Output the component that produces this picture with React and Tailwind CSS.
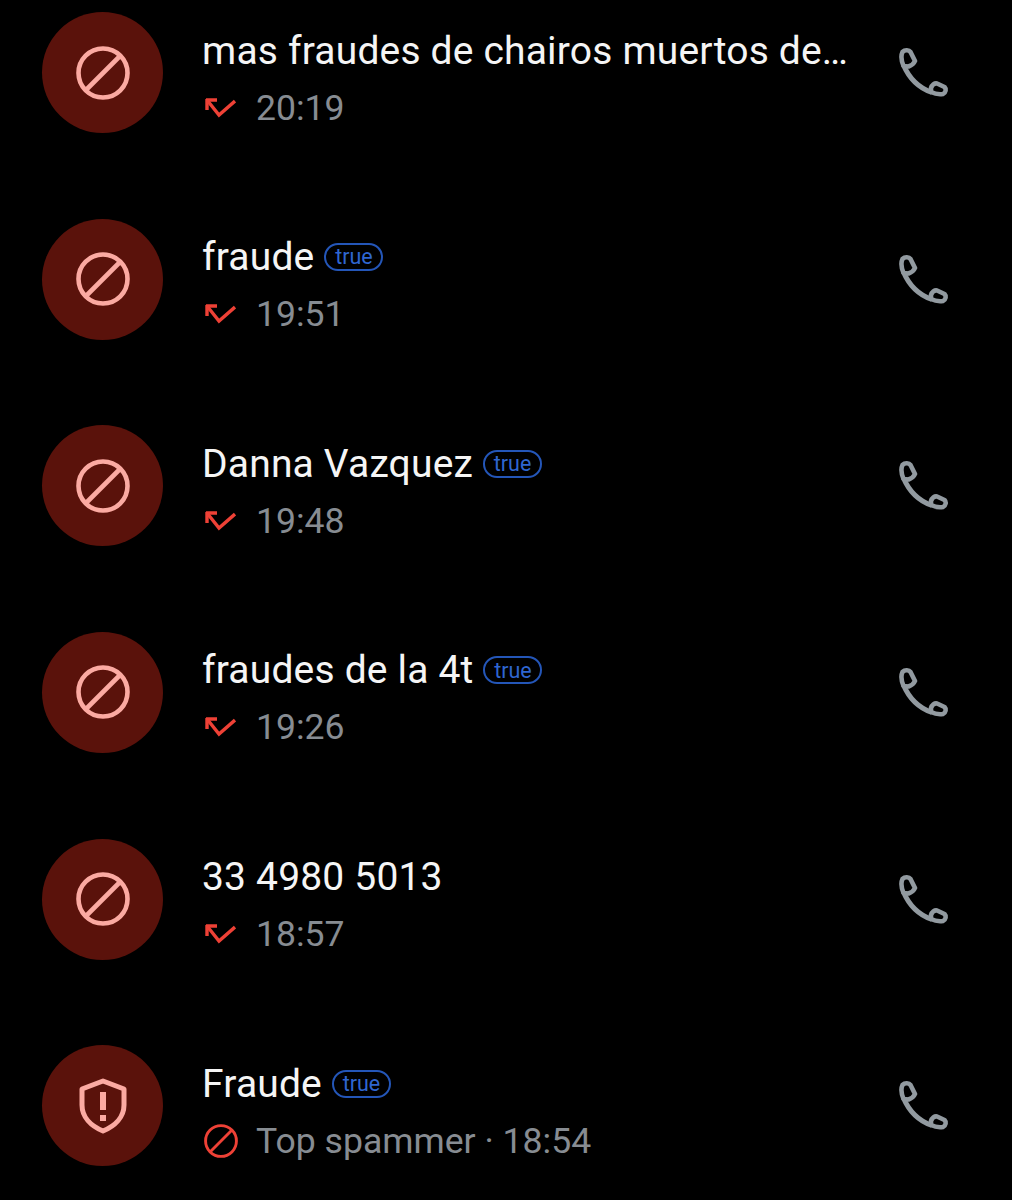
const calls = [
  { name: "mas fraudes de chairos muertos de…", time: "20:19" },
  { name: "fraude", time: "19:51", badge: true },
  { name: "Danna Vazquez", time: "19:48", badge: true },
  { name: "fraudes de la 4t", time: "19:26", badge: true },
  { name: "33 4980 5013", time: "18:57" },
  { name: "Fraude", time: "18:54", badge: true, spammer: true },
];

function BlockIcon({ className }) {
  return (
    <svg viewBox="0 0 54 54" fill="none" stroke="currentColor" strokeWidth="4.6" className={className}>
      <circle cx="27" cy="27" r="24.500" />
      <path d="M10 44 44 10" />
    </svg>
  );
}

function ShieldIcon({ className }) {
  return (
    <svg viewBox="0 0 48 56" fill="none" className={className}>
      <path
        d="M24 3 45 11V27C45 39 36 48 24 53 12 48 3 39 3 27V11Z"
        stroke="currentColor"
        strokeWidth="5"
        strokeLinejoin="round"
      />
      <path d="M21 14h6v18h-6zM21 37h6v6h-6z" fill="currentColor" />
    </svg>
  );
}

function MissedIcon() {
  return (
    <svg viewBox="0 0 32 22" fill="none" stroke="#ee4136" strokeWidth="3.4" className="h-[22px] w-8 shrink-0">
      <path d="M2 3h11M3 2v11" />
      <path d="M3 3 15 18 31 4" />
    </svg>
  );
}

// handset: two hollow ends joined by a solid curved grip
function PhoneIcon() {
  return (
    <svg viewBox="0 0 50 50" fill="none" stroke="#929aa0" strokeWidth="4.6" strokeLinejoin="round" className="h-[50px] w-[50px]">
      <path d="M3.500 4C6 1.500 10 2 11.500 4L16 13C15 15.500 12 17.500 9.500 18.500L4.500 18C2.500 13 2 7 3.500 4Z" />
      <path d="M4.500 17C10 30 20 40 33 44.500" strokeWidth="5" />
      <path d="M32 40C33 37 35.500 35 38 35.500L45.500 39C47.500 41 47 44.500 44 46 40.500 46.500 36 46 32 44Z" />
    </svg>
  );
}

function CallRow({ call }) {
  return (
    <div className="flex h-[122px] items-center pl-[42px]">
      <div className="mb-px flex h-[121px] w-[121px] shrink-0 items-center justify-center rounded-full bg-[#5a120b] text-[#fbaaa2]">
        {call.spammer ? <ShieldIcon className="h-[56px] w-[48px]" /> : <BlockIcon className="h-[54px] w-[54px]" />}
      </div>
      <div className="ml-[39px] flex w-[660px] shrink-0 flex-col pt-3">
        <div className="flex h-[48px] items-center text-[39px] leading-[48px] tracking-[0.18px] text-[#f5f5f5]">
          <span className="whitespace-nowrap">{call.name}</span>
          {call.badge && (
            <span className="ml-[10px] flex h-[28px] w-[59px] items-center justify-center rounded-full border-2 border-[#2456b8] text-[21.5px] leading-none tracking-normal text-[#2f66d0]">
              true
            </span>
          )}
        </div>
        <div className="mt-[9px] flex h-[48px] items-center pl-[2px] text-[35.6px] leading-[48px] text-[#878c92]">
          {call.spammer ? (
            <>
              <BlockIcon className="h-[34px] w-[34px] shrink-0 text-[#ee4136]" />
              <span className="ml-[18px] whitespace-nowrap">Top spammer · {call.time}</span>
            </>
          ) : (
            <>
              <MissedIcon />
              <span className="ml-[20px]">{call.time}</span>
            </>
          )}
        </div>
      </div>
      <div className="ml-[37px] shrink-0">
        <PhoneIcon />
      </div>
    </div>
  );
}

export default function App() {
  return (
    <div className="flex h-[1200px] flex-col gap-[84.67px] overflow-hidden bg-black pt-3 font-['Roboto',sans-serif]">
      {calls.map((call) => (
        <CallRow key={call.time} call={call} />
      ))}
    </div>
  );
}
